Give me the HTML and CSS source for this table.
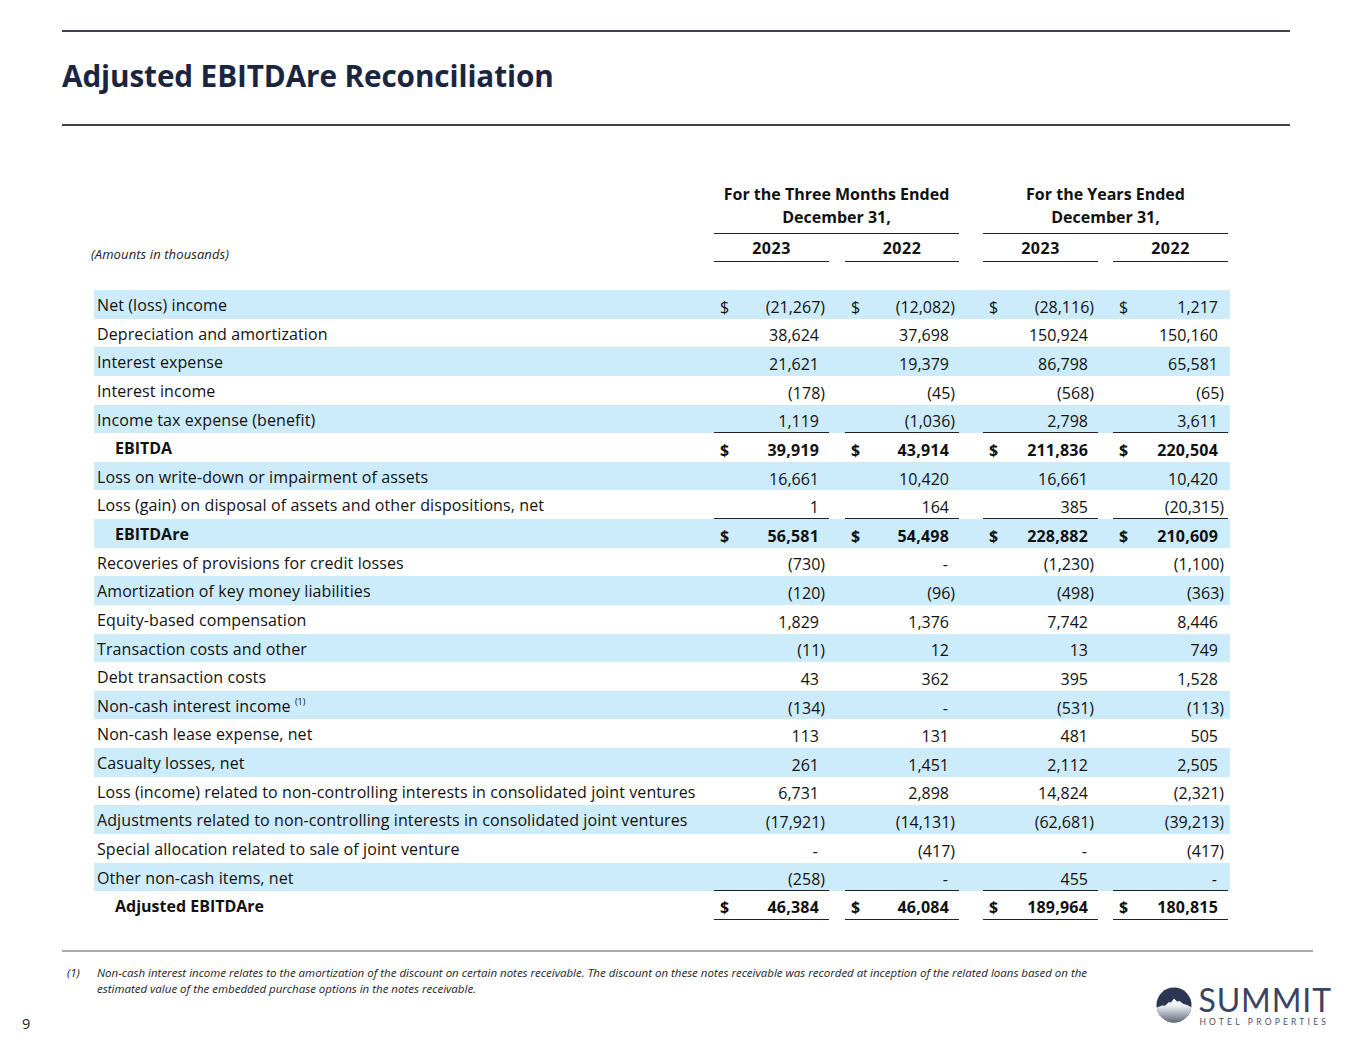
FILE: index.html
```html
<!DOCTYPE html>
<html lang="en">
<head>
<meta charset="utf-8">
<title>Adjusted EBITDAre Reconciliation</title>
<link rel="stylesheet" href="styles.css">
</head>
<body>
<div class="slide">
  <div class="rule rule-top"></div>
  <h1 class="title">Adjusted EBITDAre Reconciliation</h1>
  <div class="rule rule-mid"></div>

  <div class="table">
    <div class="head-groups">
      <div class="lblcol"></div>
      <div class="group g1">For the Three Months Ended<br>December 31,</div>
      <div class="group g2">For the Years Ended<br>December 31,</div>
    </div>
    <div class="head-years">
      <div class="lblcol amounts">(Amounts in thousands)</div>
      <div class="yr">2023</div>
      <div class="yr">2022</div>
      <div class="yr">2023</div>
      <div class="yr">2022</div>
    </div>

    <div class="rows">
      <div class="row band">
        <div class="lbl">Net (loss) income</div>
        <div class="c"><span class="d">$</span><span class="v neg">(21,267)</span></div>
        <div class="c"><span class="d">$</span><span class="v neg">(12,082)</span></div>
        <div class="c"><span class="d">$</span><span class="v neg">(28,116)</span></div>
        <div class="c"><span class="d">$</span><span class="v">1,217</span></div>
      </div>
      <div class="row">
        <div class="lbl">Depreciation and amortization</div>
        <div class="c"><span class="v">38,624</span></div>
        <div class="c"><span class="v">37,698</span></div>
        <div class="c"><span class="v">150,924</span></div>
        <div class="c"><span class="v">150,160</span></div>
      </div>
      <div class="row band">
        <div class="lbl">Interest expense</div>
        <div class="c"><span class="v">21,621</span></div>
        <div class="c"><span class="v">19,379</span></div>
        <div class="c"><span class="v">86,798</span></div>
        <div class="c"><span class="v">65,581</span></div>
      </div>
      <div class="row">
        <div class="lbl">Interest income</div>
        <div class="c"><span class="v neg">(178)</span></div>
        <div class="c"><span class="v neg">(45)</span></div>
        <div class="c"><span class="v neg">(568)</span></div>
        <div class="c"><span class="v neg">(65)</span></div>
      </div>
      <div class="row band">
        <div class="lbl">Income tax expense (benefit)</div>
        <div class="c ul"><span class="v">1,119</span></div>
        <div class="c ul"><span class="v neg">(1,036)</span></div>
        <div class="c ul"><span class="v">2,798</span></div>
        <div class="c ul"><span class="v">3,611</span></div>
      </div>
      <div class="row total">
        <div class="lbl">EBITDA</div>
        <div class="c"><span class="d">$</span><span class="v">39,919</span></div>
        <div class="c"><span class="d">$</span><span class="v">43,914</span></div>
        <div class="c"><span class="d">$</span><span class="v">211,836</span></div>
        <div class="c"><span class="d">$</span><span class="v">220,504</span></div>
      </div>
      <div class="row band">
        <div class="lbl">Loss on write-down or impairment of assets</div>
        <div class="c"><span class="v">16,661</span></div>
        <div class="c"><span class="v">10,420</span></div>
        <div class="c"><span class="v">16,661</span></div>
        <div class="c"><span class="v">10,420</span></div>
      </div>
      <div class="row">
        <div class="lbl">Loss (gain) on disposal of assets and other dispositions, net</div>
        <div class="c ul"><span class="v">1</span></div>
        <div class="c ul"><span class="v">164</span></div>
        <div class="c ul"><span class="v">385</span></div>
        <div class="c ul"><span class="v neg">(20,315)</span></div>
      </div>
      <div class="row band total">
        <div class="lbl">EBITDAre</div>
        <div class="c"><span class="d">$</span><span class="v">56,581</span></div>
        <div class="c"><span class="d">$</span><span class="v">54,498</span></div>
        <div class="c"><span class="d">$</span><span class="v">228,882</span></div>
        <div class="c"><span class="d">$</span><span class="v">210,609</span></div>
      </div>
      <div class="row">
        <div class="lbl">Recoveries of provisions for credit losses</div>
        <div class="c"><span class="v neg">(730)</span></div>
        <div class="c"><span class="v dash">-</span></div>
        <div class="c"><span class="v neg">(1,230)</span></div>
        <div class="c"><span class="v neg">(1,100)</span></div>
      </div>
      <div class="row band">
        <div class="lbl">Amortization of key money liabilities</div>
        <div class="c"><span class="v neg">(120)</span></div>
        <div class="c"><span class="v neg">(96)</span></div>
        <div class="c"><span class="v neg">(498)</span></div>
        <div class="c"><span class="v neg">(363)</span></div>
      </div>
      <div class="row">
        <div class="lbl">Equity-based compensation</div>
        <div class="c"><span class="v">1,829</span></div>
        <div class="c"><span class="v">1,376</span></div>
        <div class="c"><span class="v">7,742</span></div>
        <div class="c"><span class="v">8,446</span></div>
      </div>
      <div class="row band">
        <div class="lbl">Transaction costs and other</div>
        <div class="c"><span class="v neg">(11)</span></div>
        <div class="c"><span class="v">12</span></div>
        <div class="c"><span class="v">13</span></div>
        <div class="c"><span class="v">749</span></div>
      </div>
      <div class="row">
        <div class="lbl">Debt transaction costs</div>
        <div class="c"><span class="v">43</span></div>
        <div class="c"><span class="v">362</span></div>
        <div class="c"><span class="v">395</span></div>
        <div class="c"><span class="v">1,528</span></div>
      </div>
      <div class="row band">
        <div class="lbl">Non-cash interest income <sup class="fn">(1)</sup></div>
        <div class="c"><span class="v neg">(134)</span></div>
        <div class="c"><span class="v dash">-</span></div>
        <div class="c"><span class="v neg">(531)</span></div>
        <div class="c"><span class="v neg">(113)</span></div>
      </div>
      <div class="row">
        <div class="lbl">Non-cash lease expense, net</div>
        <div class="c"><span class="v">113</span></div>
        <div class="c"><span class="v">131</span></div>
        <div class="c"><span class="v">481</span></div>
        <div class="c"><span class="v">505</span></div>
      </div>
      <div class="row band">
        <div class="lbl">Casualty losses, net</div>
        <div class="c"><span class="v">261</span></div>
        <div class="c"><span class="v">1,451</span></div>
        <div class="c"><span class="v">2,112</span></div>
        <div class="c"><span class="v">2,505</span></div>
      </div>
      <div class="row">
        <div class="lbl">Loss (income) related to non-controlling interests in consolidated joint ventures</div>
        <div class="c"><span class="v">6,731</span></div>
        <div class="c"><span class="v">2,898</span></div>
        <div class="c"><span class="v">14,824</span></div>
        <div class="c"><span class="v neg">(2,321)</span></div>
      </div>
      <div class="row band">
        <div class="lbl">Adjustments related to non-controlling interests in consolidated joint ventures</div>
        <div class="c"><span class="v neg">(17,921)</span></div>
        <div class="c"><span class="v neg">(14,131)</span></div>
        <div class="c"><span class="v neg">(62,681)</span></div>
        <div class="c"><span class="v neg">(39,213)</span></div>
      </div>
      <div class="row">
        <div class="lbl">Special allocation related to sale of joint venture</div>
        <div class="c"><span class="v dash">-</span></div>
        <div class="c"><span class="v neg">(417)</span></div>
        <div class="c"><span class="v dash">-</span></div>
        <div class="c"><span class="v neg">(417)</span></div>
      </div>
      <div class="row band">
        <div class="lbl">Other non-cash items, net</div>
        <div class="c ul"><span class="v neg">(258)</span></div>
        <div class="c ul"><span class="v dash">-</span></div>
        <div class="c ul"><span class="v">455</span></div>
        <div class="c ul"><span class="v dash">-</span></div>
      </div>
      <div class="row total">
        <div class="lbl">Adjusted EBITDAre</div>
        <div class="c ul"><span class="d">$</span><span class="v">46,384</span></div>
        <div class="c ul"><span class="d">$</span><span class="v">46,084</span></div>
        <div class="c ul"><span class="d">$</span><span class="v">189,964</span></div>
        <div class="c ul"><span class="d">$</span><span class="v">180,815</span></div>
      </div>
    </div>
  </div>

  <div class="rule rule-foot"></div>
  <div class="footer">
    <div class="footnote">
      <span class="fn-num">(1)</span>
      <span class="fn-text">Non-cash interest income relates to the amortization of the discount on certain notes receivable. The discount on these notes receivable was recorded at inception of the related loans based on the estimated value of the embedded purchase options in the notes receivable.</span>
    </div>
    <div class="bottom">
      <div class="page">9</div>
      <div class="logo">
        <svg class="logo-mark" width="36" height="36" viewBox="0 0 36 36">
          <defs>
            <clipPath id="circ"><circle cx="18" cy="18" r="17.5"/></clipPath>
            <linearGradient id="mtn" x1="0" y1="0" x2="0" y2="1">
              <stop offset="0" stop-color="#ffffff"/>
              <stop offset="0.3" stop-color="#eceef2"/>
              <stop offset="1" stop-color="#5f6379"/>
            </linearGradient>
          </defs>
          <g clip-path="url(#circ)">
            <rect x="0" y="0" width="36" height="36" fill="#2c3651"/>
            <path d="M0 21 L6 18.5 L9 18.8 L13 15 L15 15.5 L18 11.5 L21 14.5 L23.5 14 L27 16.8 L31 18 L36 20.5 L36 36 L0 36 Z" fill="url(#mtn)"/>
          </g>
        </svg>
        <div class="logo-text">
          <div class="logo-name">SUMMIT</div>
          <div class="logo-sub">HOTEL PROPERTIES</div>
        </div>
      </div>
    </div>
  </div>
</div>
</body>
</html>
```

FILE: styles.css
```css
* { box-sizing: border-box; }
html, body { margin: 0; padding: 0; background: #fff; }
body {
  font-family: "Open Sans", "Noto Sans", "Liberation Sans", sans-serif;
  color: #111;
  width: 1365px;
  height: 1055px;
  overflow: hidden;
}
.slide {
  padding: 30px 0 0 62px;
}
.rule { height: 2px; }
.rule-top { width: 1228px; background: #3d424c; }
.rule-mid { width: 1228px; background: #3d424c; }
.title {
  margin: 26px 0 30px 0;
  height: 36px;
  font-size: 29.7px;
  line-height: 36px;
  font-weight: 700;
  color: #1c2540;
  letter-spacing: -0.1px;
}
.table {
  margin-left: 32px;
  width: 1136px;
  font-size: 16px;
}
.head-groups, .head-years, .row {
  display: flex;
}
.lblcol { width: 620px; flex: none; }
.head-groups { margin-top: 57px; }
.group {
  flex: none;
  width: 245px;
  text-align: center;
  font-weight: 700;
  font-size: 16px;
  line-height: 23px;
  padding-bottom: 4px;
  border-bottom: 1.5px solid #222;
  color: #111;
}
.g2 { margin-left: 24px; }
.head-years { align-items: flex-end; }
.amounts {
  font-style: italic;
  font-size: 13px;
  line-height: 16px;
  text-indent: -3px;
  padding-bottom: 0;
  letter-spacing: 0.1px;
  color: #222;
}
.yr {
  flex: none;
  width: 115px;
  text-align: center;
  font-weight: 700;
  font-size: 16px;
  letter-spacing: 0.5px;
  line-height: 22px;
  padding-top: 3px;
  padding-bottom: 2px;
  border-bottom: 1.5px solid #222;
}
.yr:nth-child(3) { margin-left: 16px; width: 114px; }
.yr:nth-child(4) { margin-left: 24px; }
.yr:nth-child(5) { margin-left: 15px; }

.rows { margin-top: 28px; }
.row {
  height: 28.64px;
  align-items: stretch;
}
.row.band { background: #cdecfb; }
.lbl {
  width: 620px;
  flex: none;
  padding-left: 3px;
  padding-top: 2px;
  line-height: 27px;
  white-space: nowrap;
  letter-spacing: 0.1px;
  color: #111;
}
.total .lbl { font-weight: 700; padding-left: 21px; letter-spacing: 0; }
.c {
  flex: none;
  width: 115px;
  display: flex;
  justify-content: space-between;
  align-items: center;
  padding: 5px 0 0 6px;
}
.c:nth-child(3) { margin-left: 16px; width: 114px; }
.c:nth-child(4) { margin-left: 24px; }
.c:nth-child(5) { margin-left: 15px; }
.c .v { margin-left: auto; padding-right: 10px; }
.c .v.neg { padding-right: 4px; }
.c .v.dash { padding-right: 11px; }
.total .c { font-weight: 700; letter-spacing: 0.2px; }
.c.ul { border-bottom: 1.5px solid #222; }
.fn { font-size: 9px; line-height: 0; vertical-align: 7px; letter-spacing: 0; }

.rule-foot {
  width: 1251px;
  background: #a7aab2;
  margin-top: 30px;
}
.footer { position: relative; }
.footnote {
  display: flex;
  margin-top: 13px;
  font-style: italic;
  font-size: 11.5px;
  line-height: 16px;
  color: #222;
}
.fn-num { width: 35px; flex: none; padding-left: 5px; }
.fn-text { width: 1010px; }
.bottom {
  display: flex;
  justify-content: space-between;
  align-items: flex-start;
  margin-left: -62px;
  width: 1332px;
}
.page {
  margin-left: 22px;
  margin-top: 17px;
  font-size: 14.5px;
  color: #222;
}
.logo {
  display: flex;
  align-items: flex-start;
  gap: 6px;
  margin-top: -10px;
}
.logo-mark { display: block; }
.logo-text { display: flex; flex-direction: column; margin-top: -2px; }
.logo-name {
  font-family: "Lato", "Open Sans", sans-serif;
  font-size: 32px;
  line-height: 30px;
  letter-spacing: 0.9px;
  color: #3a4360;
  font-weight: 400;
}
.logo-sub {
  font-family: "Lato", "Open Sans", sans-serif;
  font-size: 8.5px;
  line-height: 10px;
  letter-spacing: 3.2px;
  color: #4a5068;
  margin-left: 1px;
  margin-top: 2px;
}
```
